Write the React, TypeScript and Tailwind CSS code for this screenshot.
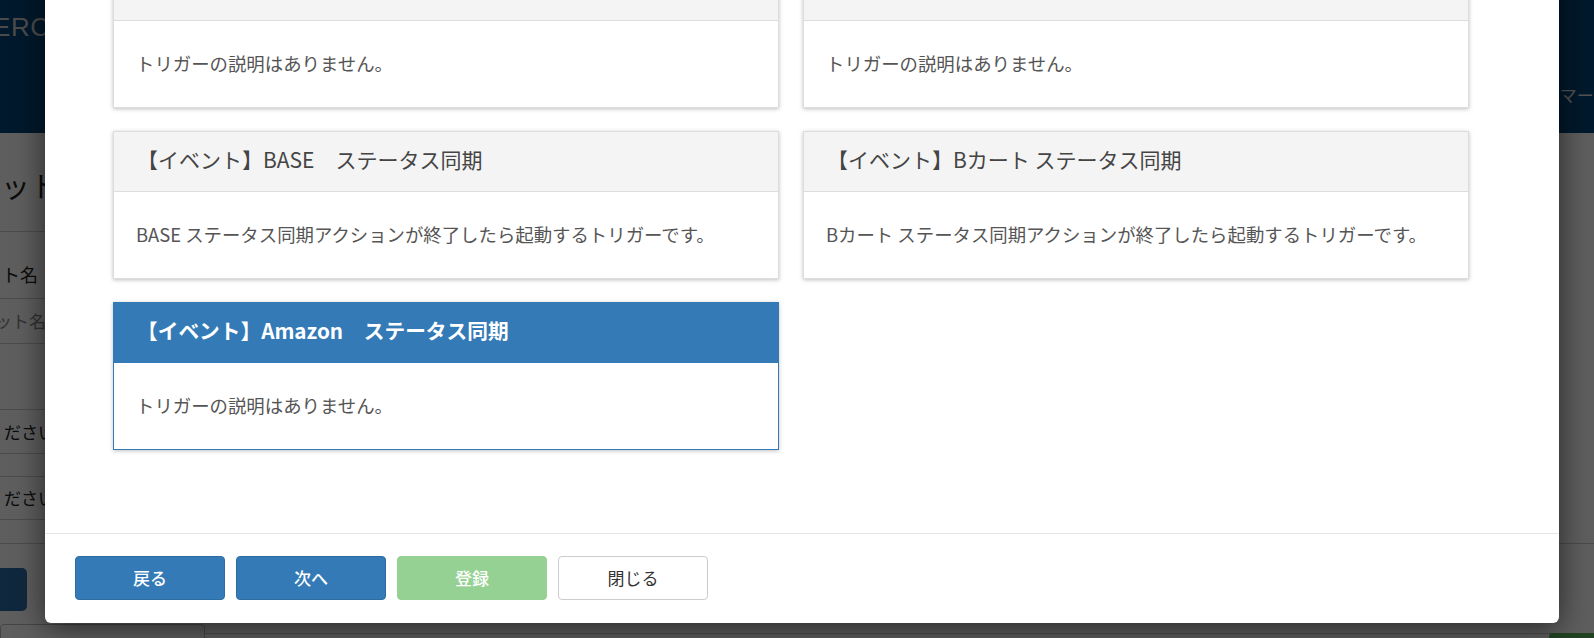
import React from "react";

const font = "font-['Noto_Sans_CJK_JP','Noto_Sans',sans-serif]";

const triggers = [
  { title: "【イベント】楽天　ステータス同期", desc: "トリガーの説明はありません。" },
  { title: "【イベント】Yahoo!　ステータス同期", desc: "トリガーの説明はありません。" },
  { title: "【イベント】BASE　ステータス同期", desc: "BASE ステータス同期アクションが終了したら起動するトリガーです。" },
  { title: "【イベント】Bカート ステータス同期", desc: "Bカート ステータス同期アクションが終了したら起動するトリガーです。" },
  { title: "【イベント】Amazon　ステータス同期", desc: "トリガーの説明はありません。", selected: true },
];

const TriggerCard = ({ title, desc, selected }: { title: string; desc: string; selected?: boolean }) => (
  <div
    className={
      selected
        ? "border border-[#337ab7] bg-white shadow-[0_1px_4px_rgba(0,0,0,0.25)]"
        : "border border-[#dddddd] bg-white shadow-[0_1px_4px_rgba(0,0,0,0.25)]"
    }
  >
    <div
      className={
        selected
          ? "h-[60px] flex items-center pb-[3px] px-[23px] bg-[#337ab7] border-b border-[#337ab7] text-white text-[20.7px] font-semibold"
          : "h-[60px] flex items-center pb-[3px] px-[23px] bg-[#f4f4f4] border-b border-[#dddddd] text-[#444444] text-[21px]"
      }
    >
      {title}
    </div>
    <div className="h-[86px] flex items-center px-[22px] text-[18.4px] text-[#555555]">{desc}</div>
  </div>
);

export default function App() {
  return (
    <div className={`relative h-[638px] w-full overflow-hidden bg-white ${font}`}>
      {/* page behind the modal */}
      <header className="h-[133px] bg-[#034479] flex justify-between">
        <div className="-ml-[92px] pt-[8px] text-[26px] tracking-wide text-[#cccccc] font-['Liberation_Sans',sans-serif]">
          COMMERCE
        </div>
        <div className="self-end pb-[26px] -mr-[50px] text-[17px] text-[#dddddd]">コマース設定</div>
      </header>

      <main className="text-[#222222]">
        <div className="w-[320px]">
          <h1 className="-ml-[28px] pt-[34px] pb-[28px] text-[29px] leading-[36px]">セット一覧</h1>
          <div className="border-t border-[#cccccc] h-[67px] flex items-end pb-[10px]">
            <span className="-ml-[34px] text-[18px]">セット名</span>
          </div>
          <div className="border-t border-[#cccccc] h-[45px] flex items-center">
            <span className="-ml-[22px] text-[17px] text-[#888888]">セット名</span>
          </div>
          <div className="border-t border-[#cccccc] h-[66px]" />
          <div className="border-t border-[#cccccc] h-[44px] flex items-center">
            <span className="-ml-[80px] text-[17px]">選択してください</span>
          </div>
          <div className="border-t border-[#cccccc] h-[23px]" />
          <div className="border-t border-[#cccccc] h-[43px] flex items-center">
            <span className="-ml-[80px] text-[17px]">選択してください</span>
          </div>
          <div className="border-t border-[#cccccc] h-[24px]" />
        </div>
        <div className="border-t border-[#cccccc] h-[90px] flex justify-between pt-[24px]">
          <div className="-ml-[74px] w-[101px] h-[43px] rounded-[5px] bg-[#2d6ca8]" />
        </div>
        <div className="border-t border-[#cccccc] flex justify-between">
          <div className="-mt-[10px] w-[205px] h-[30px] rounded-[4px] border border-[#bbbbbb] bg-white" />
          <div className="-mt-[1px] w-[45px] h-[30px] rounded-tl-[4px] bg-[#5cb85c]" />
        </div>
      </main>

      {/* backdrop */}
      <div className="absolute inset-0 bg-black/[0.63]" />

      {/* modal */}
      <div className="absolute left-[45px] w-[1514px] bottom-[15px] bg-white rounded-[6px] shadow-[0_5px_30px_rgba(0,0,0,0.6)]">
        <div className="grid grid-cols-2 gap-x-[24px] gap-y-[23px] pl-[68px] pr-[90px] pt-[20px] pb-[83px]">
          {triggers.map((t) => (
            <TriggerCard key={t.title} title={t.title} desc={t.desc} selected={t.selected} />
          ))}
        </div>
        <div className="border-t border-[#e5e5e5] px-[30px] pt-[22px] pb-[23px] flex gap-[11px]">
          <button className="w-[150px] h-[44px] rounded-[4px] bg-[#337ab7] border border-[#2e6da4] text-white text-[17px] font-medium">
            戻る
          </button>
          <button className="w-[150px] h-[44px] rounded-[4px] bg-[#337ab7] border border-[#2e6da4] text-white text-[17px] font-medium">
            次へ
          </button>
          <button className="w-[150px] h-[44px] rounded-[4px] bg-[#96d194] border border-[#96d194] text-white text-[17px] font-medium">
            登録
          </button>
          <button className="w-[150px] h-[44px] rounded-[4px] bg-white border border-[#cccccc] text-[#333333] text-[17px]">
            閉じる
          </button>
        </div>
      </div>
    </div>
  );
}
